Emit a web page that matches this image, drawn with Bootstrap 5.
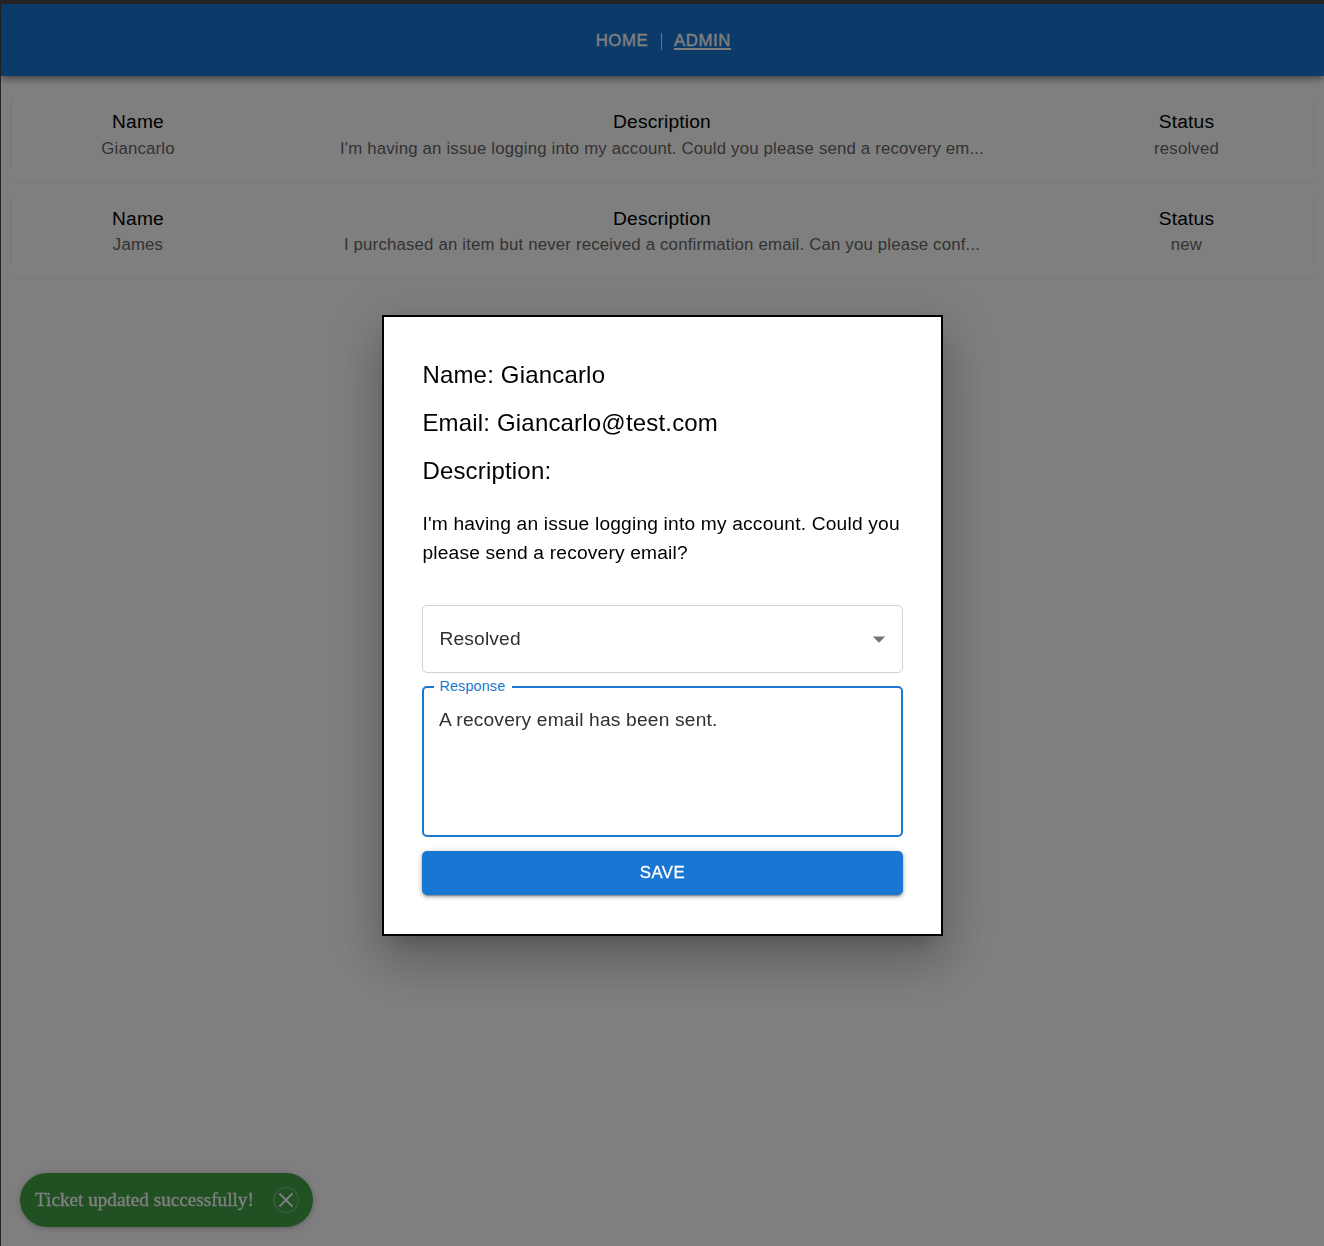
<!DOCTYPE html>
<html lang="en">
<head>
<meta charset="utf-8">
<meta name="viewport" content="width=device-width, initial-scale=1">
<title>Admin</title>
<link href="https://cdn.jsdelivr.net/npm/bootstrap@5.3.0/dist/css/bootstrap.min.css" rel="stylesheet">
<style>
  html, body { height: 100%; }
  body { font-family: "Liberation Sans", Arial, sans-serif; background: #fff; overflow: hidden; color: #000; }
  .page { height: 100vh; border-top: 4px solid #4b4b4b; border-left: 1px solid #4b4b4b; }
  .topbar { height: 72px; background: #1976d2; padding: 1px 0 0 1.6px; font-size: 16.8px; letter-spacing: .6px; box-shadow: 0 2px 5px -1px rgba(0,0,0,.3), 0 5px 6px rgba(0,0,0,.16), 0 1px 12px rgba(0,0,0,.12); }
  .topbar a { color: #fff; -webkit-text-stroke: .35px #fff; }
  .topbar .current { text-decoration-thickness: 2px; text-underline-offset: 1.5px; }
  .divider { width: 1.5px; height: 17px; background: #e4e4e4; margin: 2px 11.5px 0 12.5px; }
  .tickets { padding: 24px 10px 0 9px; }
  .ticket { padding-bottom: 14px; margin-bottom: 14px; border-bottom: 1px solid #f0f0f0; }
  .cells { height: 67.5px; padding-top: 8px; border: solid #f0f0f0; border-width: 0 1px 0 2px; text-align: center; }
  .side { width: 252px; flex: none; }
  .side:last-child { width: 253px; }
  .cell-title { font-size: 19.2px; line-height: 28px; letter-spacing: .18px; }
  .cell-text { font-size: 16.8px; line-height: 24px; letter-spacing: .18px; color: #666; }
  .ticket:first-child .cell-text { padding-top: 1px; }
  .modal-backdrop { --bs-backdrop-opacity: .5; }
  .ticket-dialog { width: 561px; max-width: none; height: 621px; margin: 315px 0 0 382px; }
  .ticket-panel { height: 621px; border: 2px solid #000; border-radius: 0; padding: 39px 38.4px 38px; color: #000; box-shadow: 0 13px 18px -8px rgba(0,0,0,.2), 0 29px 46px 4px rgba(0,0,0,.14), 0 11px 55px 10px rgba(0,0,0,.12); }
  .ticket-panel > * { flex-shrink: 0; }
  .line-lg { font-size: 24px; line-height: 38.4px; letter-spacing: .18px; margin-bottom: 9.6px; }
  .body-copy { font-size: 19.2px; line-height: 29px; letter-spacing: .18px; margin: 8.6px 0 38.6px; }
  .status-box { height: 68px; border: 1px solid #d2d2d2; border-radius: 5px; padding: 0 16px; font-size: 19.2px; letter-spacing: .18px; color: #303030; }
  .response { position: relative; height: 151px; margin-top: 13px; border: 2.4px solid #1976d2; border-radius: 5px; }
  .response label { position: absolute; left: 10px; top: -12px; padding: 0 7px 0 5px; background: #fff; color: #1976d2; font-size: 14.4px; line-height: 21px; letter-spacing: .14px; }
  .response textarea { height: 145px; padding: 18px 14.5px; border: 0; resize: none; font-size: 19.2px; line-height: 27.6px; letter-spacing: .18px; color: #303030; background: transparent; }
  .btn-save { height: 44px; margin-top: 14px; padding: 0 0 1px; background: #1976d2; color: #fff; border: 0; border-radius: 5px; font-size: 16.8px; letter-spacing: .5px; -webkit-text-stroke: .3px #fff; box-shadow: 0 4px 1px -3px rgba(0,0,0,.2), 0 2px 3px rgba(0,0,0,.24), 0 1px 6px rgba(0,0,0,.2); }
  .snack { position: fixed; left: 20px; bottom: 19px; width: 293px; height: 54px; padding: 0 14px 0 15px; background: #43a047; color: #fff; border-radius: 27px; font: 500 19.2px "Liberation Serif", "Times New Roman", serif; box-shadow: 0 1px 5px rgba(0,0,0,.2), 0 1px 12px rgba(0,0,0,.1); }
  .snack span { -webkit-text-stroke: .3px #fff; white-space: nowrap; }
</style>
</head>
<body>
<div class="page">
  <nav class="topbar d-flex justify-content-center align-items-center position-relative">
    <a href="#" class="text-decoration-none">HOME</a><span class="divider"></span><a href="#" class="current">ADMIN</a>
  </nav>
  <main class="tickets">
    <section class="ticket">
      <div class="cells d-flex">
        <div class="side"><div class="cell-title">Name</div><div class="cell-text">Giancarlo</div></div>
        <div class="flex-fill"><div class="cell-title">Description</div><div class="cell-text">I'm having an issue logging into my account. Could you please send a recovery em...</div></div>
        <div class="side"><div class="cell-title">Status</div><div class="cell-text">resolved</div></div>
      </div>
    </section>
    <section class="ticket">
      <div class="cells d-flex">
        <div class="side"><div class="cell-title">Name</div><div class="cell-text">James</div></div>
        <div class="flex-fill"><div class="cell-title">Description</div><div class="cell-text">I purchased an item but never received a confirmation email. Can you please conf...</div></div>
        <div class="side"><div class="cell-title">Status</div><div class="cell-text">new</div></div>
      </div>
    </section>
  </main>
  <div class="snack d-flex align-items-center justify-content-between">
    <span>Ticket updated successfully!</span>
    <svg width="26" height="26" viewBox="0 0 26 26" fill="none" stroke="#fff"><circle cx="13" cy="13" r="12.4" stroke-opacity=".38"/><path d="M6.5 6.5l13 13M19.5 6.5l-13 13" stroke-width="1.8"/></svg>
  </div>
</div>
<div class="modal-backdrop show"></div>
<div class="modal d-block overflow-hidden" tabindex="-1">
  <div class="modal-dialog ticket-dialog">
    <div class="modal-content ticket-panel">
      <div class="line-lg">Name: Giancarlo</div>
      <div class="line-lg">Email: Giancarlo@test.com</div>
      <div class="line-lg">Description:</div>
      <p class="body-copy">I'm having an issue logging into my account. Could you please send a recovery email?</p>
      <div class="status-box d-flex align-items-center justify-content-between">
        <span>Resolved</span>
        <svg width="14" height="7" viewBox="0 0 14 7"><path d="M.8 .5h12.4L7 6.7z" fill="#757575"/></svg>
      </div>
      <div class="response">
        <label for="response">Response</label>
        <textarea id="response" class="w-100 d-block">A recovery email has been sent.</textarea>
      </div>
      <button type="button" class="btn btn-save w-100">SAVE</button>
    </div>
  </div>
</div>
<script src="https://cdn.jsdelivr.net/npm/bootstrap@5.3.0/dist/js/bootstrap.bundle.min.js"></script>
</body>
</html>
